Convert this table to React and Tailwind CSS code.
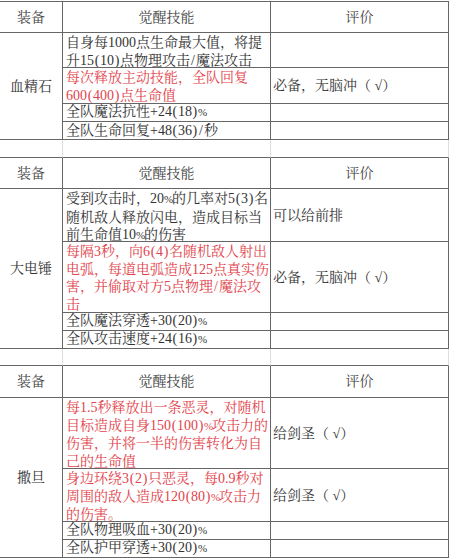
import React from "react";

const RED = "text-[#e2434b]";

const sections = [
  {
    name: "血精石",
    headerH: "h-[31px]",
    rows: [
      { h: "h-[35px]", red: false, lines: ["自身每1000点生命最大值，将提", "升15(10)点物理攻击/魔法攻击"], ev: "" },
      { h: "h-[36px]", red: true, lines: ["每次释放主动技能，全队回复", "600(400)点生命值"], ev: "必备，无脑冲（ √）" },
      { h: "h-[18px]", red: false, lines: ["全队魔法抗性+24(18)%"], ev: "" },
      { h: "h-[18px]", red: false, lines: ["全队生命回复+48(36)/秒"], ev: "" },
    ],
  },
  {
    name: "大电锤",
    headerH: "h-[31px]",
    rows: [
      { h: "h-[53px]", red: false, lines: ["受到攻击时，20%的几率对5(3)名", "随机敌人释放闪电，造成目标当", "前生命值10%的伤害"], ev: "可以给前排" },
      { h: "h-[71px]", red: true, lines: ["每隔3秒，向6(4)名随机敌人射出", "电弧，每道电弧造成125点真实伤", "害，并偷取对方5点物理/魔法攻", "击"], ev: "必备，无脑冲（ √）" },
      { h: "h-[18px]", red: false, lines: ["全队魔法穿透+30(20)%"], ev: "" },
      { h: "h-[18px]", red: false, lines: ["全队攻击速度+24(16)%"], ev: "" },
    ],
  },
  {
    name: "撒旦",
    headerH: "h-[32px]",
    rows: [
      { h: "h-[71px]", red: true, lines: ["每1.5秒释放出一条恶灵，对随机", "目标造成自身150(100)%攻击力的", "伤害，并将一半的伤害转化为自", "己的生命值"], ev: "给剑圣（ √）" },
      { h: "h-[53px]", red: true, lines: ["身边环绕3(2)只恶灵，每0.9秒对", "周围的敌人造成120(80)%攻击力", "的伤害。"], ev: "给剑圣（ √）" },
      { h: "h-[18px]", red: false, lines: ["全队物理吸血+30(20)%"], ev: "" },
      { h: "h-[18px]", red: false, lines: ["全队护甲穿透+30(20)%"], ev: "" },
    ],
  },
];

function Txt({ t }) {
  const parts = [];
  let buf = "";
  const flush = (k) => {
    if (buf) {
      parts.push(<React.Fragment key={"t" + k}>{buf}</React.Fragment>);
      buf = "";
    }
  };
  [...t].forEach((c, i) => {
    if (c === "(" || c === ")" || c === "/") {
      flush(i);
      parts.push(
        <span key={i} className="inline-block w-[6px] text-center">
          {c}
        </span>
      );
    } else if (c === "%") {
      flush(i);
      parts.push(
        <span key={i} className="inline-block w-[8px] text-center text-[11px]">
          {c}
        </span>
      );
    } else {
      buf += c;
    }
  });
  flush("end");
  return <>{parts}</>;
}

function Section({ s }) {
  return (
    <div>
      <div className={`grid grid-cols-[63px_208px_178px] ${s.headerH} text-[#444]`}>
        <div className="border-r border-b border-[#666] flex items-center justify-center">装备</div>
        <div className="border-r border-b border-[#666] flex items-center justify-center">觉醒技能</div>
        <div className="border-r border-b border-[#666] flex items-center justify-center">评价</div>
      </div>
      <div className="grid grid-cols-[63px_386px]">
        <div className="border-r border-b border-[#666] flex items-center justify-center text-[#333]">
          {s.name}
        </div>
        <div className="flex flex-col">
          {s.rows.map((r, i) => (
            <div key={i} className={`grid grid-cols-[208px_178px] ${r.h}`}>
              <div
                className={`border-r border-b border-[#666] pl-[3px] leading-[17.5px] whitespace-nowrap overflow-hidden ${
                  r.lines.length === 1 ? "flex items-center" : "pt-px"
                } ${r.red ? RED : "text-[#333]"}`}
              >
                {r.lines.length === 1 ? (
                  <span>
                    <Txt t={r.lines[0]} />
                  </span>
                ) : (
                  r.lines.map((l, j) => (
                    <div key={j}>
                      <Txt t={l} />
                    </div>
                  ))
                )}
              </div>
              <div className="border-r border-b border-[#666] pl-[2px] flex items-center text-[#333] whitespace-nowrap">
                {r.ev}
              </div>
            </div>
          ))}
        </div>
      </div>
    </div>
  );
}

function Blank({ h }) {
  return (
    <div className={`grid grid-cols-[63px_208px_178px] ${h}`}>
      <div className="border-r border-[#ddd] border-b-[#666] border-b"></div>
      <div className="border-r border-[#ddd] border-b-[#666] border-b"></div>
      <div className="border-r border-[#ddd] border-b-[#666] border-b"></div>
    </div>
  );
}

export default function App() {
  return (
    <div
      className="w-[452px] h-[560px] bg-white overflow-hidden text-[14px]"
      style={{ fontFamily: '"Liberation Serif", "Noto Serif CJK SC", "Noto Sans CJK SC", serif' }}
    >
      <div className="w-[449px] mt-px border-t border-[#666]">
        <Section s={sections[0]} />
        <Blank h="h-[18px]" />
        <Section s={sections[1]} />
        <Blank h="h-[17px]" />
        <Section s={sections[2]} />
      </div>
    </div>
  );
}
